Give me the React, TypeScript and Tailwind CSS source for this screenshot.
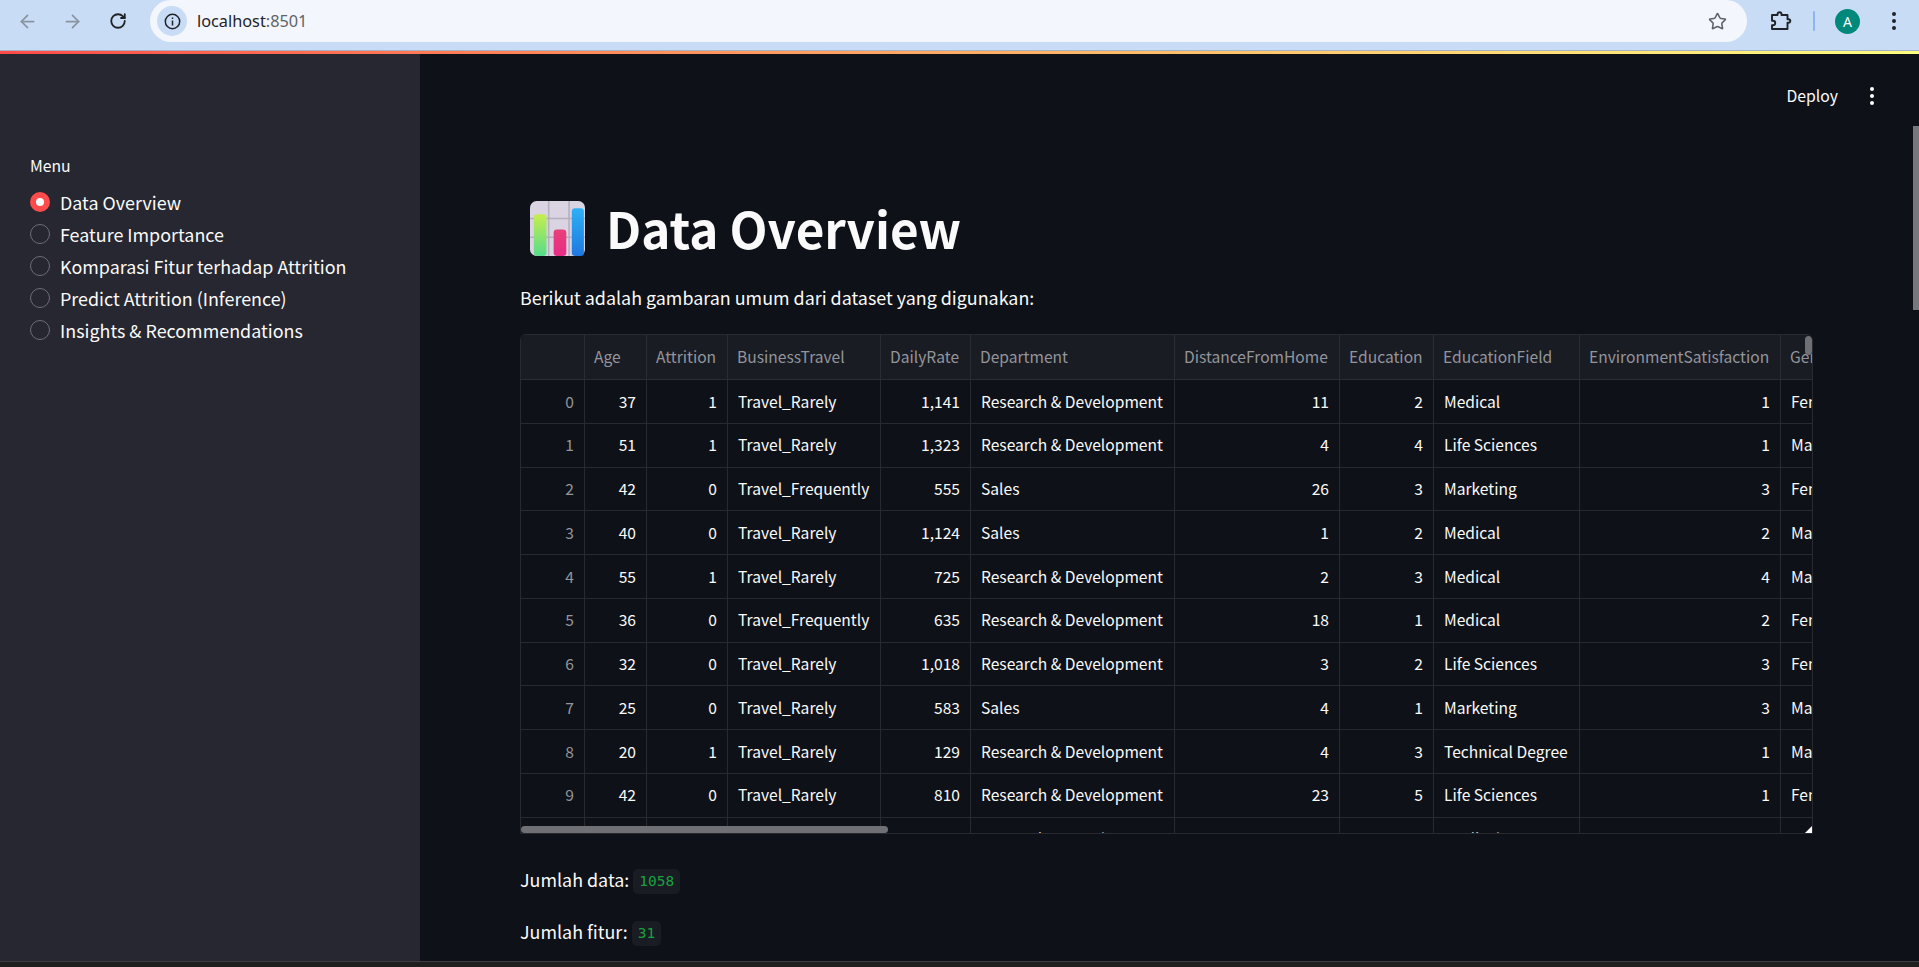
import React from 'react';
import { ArrowLeft, ArrowRight, RotateCw, Star } from 'lucide-react';

const columns = [
  { key: 'idx', label: '', width: 'w-[64px]' },
  { key: 'age', label: 'Age', width: 'w-[62px]' },
  { key: 'attr', label: 'Attrition', width: 'w-[81px]' },
  { key: 'travel', label: 'BusinessTravel', width: 'w-[153px]' },
  { key: 'rate', label: 'DailyRate', width: 'w-[90px]' },
  { key: 'dept', label: 'Department', width: 'w-[204px]' },
  { key: 'dist', label: 'DistanceFromHome', width: 'w-[165px]' },
  { key: 'edu', label: 'Education', width: 'w-[94px]' },
  { key: 'field', label: 'EducationField', width: 'w-[146px]' },
  { key: 'env', label: 'EnvironmentSatisfaction', width: 'w-[201px]' },
  { key: 'gender', label: 'Gender', width: 'w-[80px]' },
];

const numeric = ['idx', 'age', 'attr', 'rate', 'dist', 'edu', 'env'];

const RD = 'Research & Development';
const rows: string[][] = [
  ['0', '37', '1', 'Travel_Rarely', '1,141', RD, '11', '2', 'Medical', '1', 'Female'],
  ['1', '51', '1', 'Travel_Rarely', '1,323', RD, '4', '4', 'Life Sciences', '1', 'Male'],
  ['2', '42', '0', 'Travel_Frequently', '555', 'Sales', '26', '3', 'Marketing', '3', 'Female'],
  ['3', '40', '0', 'Travel_Rarely', '1,124', 'Sales', '1', '2', 'Medical', '2', 'Male'],
  ['4', '55', '1', 'Travel_Rarely', '725', RD, '2', '3', 'Medical', '4', 'Male'],
  ['5', '36', '0', 'Travel_Frequently', '635', RD, '18', '1', 'Medical', '2', 'Female'],
  ['6', '32', '0', 'Travel_Rarely', '1,018', RD, '3', '2', 'Life Sciences', '3', 'Female'],
  ['7', '25', '0', 'Travel_Rarely', '583', 'Sales', '4', '1', 'Marketing', '3', 'Male'],
  ['8', '20', '1', 'Travel_Rarely', '129', RD, '4', '3', 'Technical Degree', '1', 'Male'],
  ['9', '42', '0', 'Travel_Rarely', '810', RD, '23', '5', 'Life Sciences', '1', 'Female'],
  ['10', '38', '0', 'Travel_Rarely', '1,009', RD, '2', '2', 'Medical', '2', 'Male'],
];

const menu = ['Data Overview', 'Feature Importance', 'Komparasi Fitur terhadap Attrition', 'Predict Attrition (Inference)', 'Insights & Recommendations'];

const BarChartEmoji = () => (
  <svg width="55" height="55" viewBox="0 0 50 50" className="shrink-0">
    <defs>
      <linearGradient id="g1" x1="0" y1="0" x2="0" y2="1">
        <stop offset="0" stopColor="#c6ee4c" />
        <stop offset="1" stopColor="#55dc8c" />
      </linearGradient>
      <linearGradient id="g2" x1="0" y1="0" x2="0" y2="1">
        <stop offset="0" stopColor="#e8407a" />
        <stop offset="1" stopColor="#e82c86" />
      </linearGradient>
      <linearGradient id="g3" x1="0" y1="0" x2="0" y2="1">
        <stop offset="0" stopColor="#2fb0f5" />
        <stop offset="1" stopColor="#1e78e0" />
      </linearGradient>
    </defs>
    <rect x="0" y="0" width="50" height="50" rx="6" fill="#d9d3e2" />
    <path d="M17 0V50M35.500 0V50M0 16H50M0 33H50" stroke="#b4aebe" strokeWidth="1.4" />
    <rect x="3.500" y="12" width="11.500" height="38" rx="3" fill="url(#g1)" />
    <rect x="21.500" y="26" width="11.500" height="24" rx="3" fill="url(#g2)" />
    <rect x="38" y="6.500" width="11" height="43.500" rx="3" fill="url(#g3)" />
  </svg>
);

const ChromeBar = () => (
  <div className="flex h-[51px] shrink-0 items-start bg-[#c9dcf6] border-b border-[#a6b2c6]" style={{ fontFamily: '"Noto Sans", sans-serif' }}>
    <div className="flex h-[42px] w-[150px] items-center text-[#8a93a0]">
      <ArrowLeft size={21} className="ml-[17px]" strokeWidth={2} />
      <ArrowRight size={21} className="ml-[24px]" strokeWidth={2} />
      <RotateCw size={18} strokeWidth={2.4} className="ml-[26px] text-[#1f2328]" />
    </div>
    <div className="flex h-[42px] w-[1597px] items-center rounded-r-[21px] rounded-l-[21px] bg-[#f3f7fd]">
      <div className="ml-[7px] flex h-[30px] w-[30px] items-center justify-center rounded-full bg-[#c9dcf6]">
        <svg width="17" height="17" viewBox="0 0 17 17" fill="none" stroke="#1f2328" strokeWidth="1.5">
          <circle cx="8.5" cy="8.5" r="7.2" />
          <path d="M8.5 7.5V12.5M8.500 4.500V6" />
        </svg>
      </div>
      <span className="ml-[10px] mt-[1px] text-[16.3px] leading-none text-[#1f2328]">
        localhost<span className="text-[#5f6368]">:8501</span>
      </span>
      <Star size={19} strokeWidth={2} className="ml-auto mr-[20px] text-[#5f6368]" />
    </div>
    <div className="flex h-[42px] flex-1 items-center">
      <svg width="22" height="20" viewBox="0 0 22 20" fill="none" className="ml-[23px]">
        <path d="M2 4H7.500V3.200A2 2 0 0 1 11.500 3.200V4H17.500V8.200H18.500A1.800 1.800 0 0 1 18.500 11.800H17.500V18H2V14.200H3A2.100 2.100 0 0 0 3 9.800H2Z" stroke="#1f2328" strokeWidth="1.9" strokeLinejoin="round" />
      </svg>
      <div className="ml-[21px] h-[20px] w-[2px] rounded bg-[#8fb5ee]" />
      <div className="ml-[20px] flex h-[25px] w-[25px] items-center justify-center rounded-full bg-[#00897b] text-[14px] text-white">A</div>
      <div className="ml-[32px] flex flex-col gap-[3px]">
        <span className="h-[4px] w-[4px] rounded-full bg-[#1f2328]" />
        <span className="h-[4px] w-[4px] rounded-full bg-[#1f2328]" />
        <span className="h-[4px] w-[4px] rounded-full bg-[#1f2328]" />
      </div>
    </div>
  </div>
);

const Sidebar = () => (
  <aside className="w-[420px] shrink-0 bg-[#262730] pl-[30px] pt-[98px] text-[#fafafa]">
    <p className="text-[15.75px] leading-[28px]">Menu</p>
    <div className="mt-[6px] flex flex-col">
      {menu.map((item, i) => (
        <div key={item} className="flex h-[32px] items-center gap-[10px]">
          {i === 0 ? (
            <span className="flex h-[20px] w-[20px] items-center justify-center rounded-full bg-[#ff4b4b]">
              <span className="h-[8px] w-[8px] rounded-full bg-white" />
            </span>
          ) : (
            <span className="h-[20px] w-[20px] rounded-full border border-[#6c6e78]" />
          )}
          <span className="text-[17.9px] leading-[32px]">{item}</span>
        </div>
      ))}
    </div>
  </aside>
);

const DataTable = () => (
  <div className="relative h-[500px] w-[1293px] overflow-hidden rounded-t-[6px] border border-[#292a30] text-[15.6px]">
    <div className="flex h-[45px] w-max bg-[#1a1c24] border-b border-[#2c2d34] text-[#93959b]">
      {columns.map(c => (
        <div key={c.key} className={`${c.width} flex shrink-0 items-center border-r border-[#2c2d34] px-[9px] whitespace-nowrap`}>
          {c.label}
        </div>
      ))}
    </div>
    {rows.map(r => (
      <div key={r[0]} className="flex h-[43.75px] w-max border-b border-[#292a30] text-[#fafafa]">
        {columns.map((c, i) => (
          <div key={c.key} className={`${c.width} flex shrink-0 items-center border-r border-[#292a30] px-[10px] whitespace-nowrap ${numeric.includes(c.key) ? 'justify-end' : 'justify-start'} ${i === 0 ? 'text-[#93959b]' : ''}`}>
            {r[i]}
          </div>
        ))}
      </div>
    ))}
    <div className="absolute bottom-0 left-0 h-[7px] w-[367px] rounded-[4px] bg-[#6f7075]" />
    <div className="absolute right-0 top-[1px] h-[19px] w-[7px] rounded-[4px] bg-[#6f7075]" />
    <svg width="7" height="7" viewBox="0 0 7 7" className="absolute bottom-0 right-0">
      <path d="M7 0V7H0Z" fill="#fff" />
    </svg>
  </div>
);

const Code = ({ children }: { children: string }) => (
  <code className="ml-[4px] inline-block rounded-[5px] bg-[#1a1c24] px-[6px] py-[3px] align-[1px] text-[14.5px] leading-[19px] text-[#18a23e]" style={{ fontFamily: '"DejaVu Sans Mono", monospace' }}>
    {children}
  </code>
);

export default function App() {
  return (
    <div className="flex h-[967px] w-[1919px] flex-col overflow-hidden bg-[#1f1f1f]" style={{ fontFamily: '"Noto Sans CJK SC", "Noto Sans", sans-serif' }}>
      <ChromeBar />
      <div className="h-[3px] shrink-0 bg-gradient-to-r from-[#ff4b4b] to-[#fffd80]" />
      <div className="flex h-[908px] shrink-0 border-b border-[#3d3d3d]">
        <Sidebar />
        <main className="relative flex-1 bg-[#0e1117] pl-[100px] text-[#fafafa]">
          <div className="flex h-[84px] items-center justify-end pr-[45px]">
            <span className="text-[15.75px]">Deploy</span>
            <div className="ml-[32px] flex flex-col gap-[3px]">
              <span className="h-[4px] w-[4px] rounded-full bg-white" />
              <span className="h-[4px] w-[4px] rounded-full bg-white" />
              <span className="h-[4px] w-[4px] rounded-full bg-white" />
            </div>
          </div>
          <div className="mt-[60px] flex h-[60px] items-center pl-[10px]">
            <BarChartEmoji />
            <h1 className="ml-[21px] text-[49.4px] font-bold leading-[60px]">Data Overview</h1>
          </div>
          <p className="mt-[23px] text-[17.9px] leading-[32px]">Berikut adalah gambaran umum dari dataset yang digunakan:</p>
          <div className="mt-[21px]">
            <DataTable />
          </div>
          <p className="mt-[29px] text-[17.9px] leading-[32px]">Jumlah data:<Code>1058</Code></p>
          <p className="mt-[20px] text-[17.9px] leading-[32px]">Jumlah fitur:<Code>31</Code></p>
          <div className="absolute right-0 top-[72px] h-[184px] w-[6px] bg-[#77787c]" />
        </main>
      </div>
    </div>
  );
}
